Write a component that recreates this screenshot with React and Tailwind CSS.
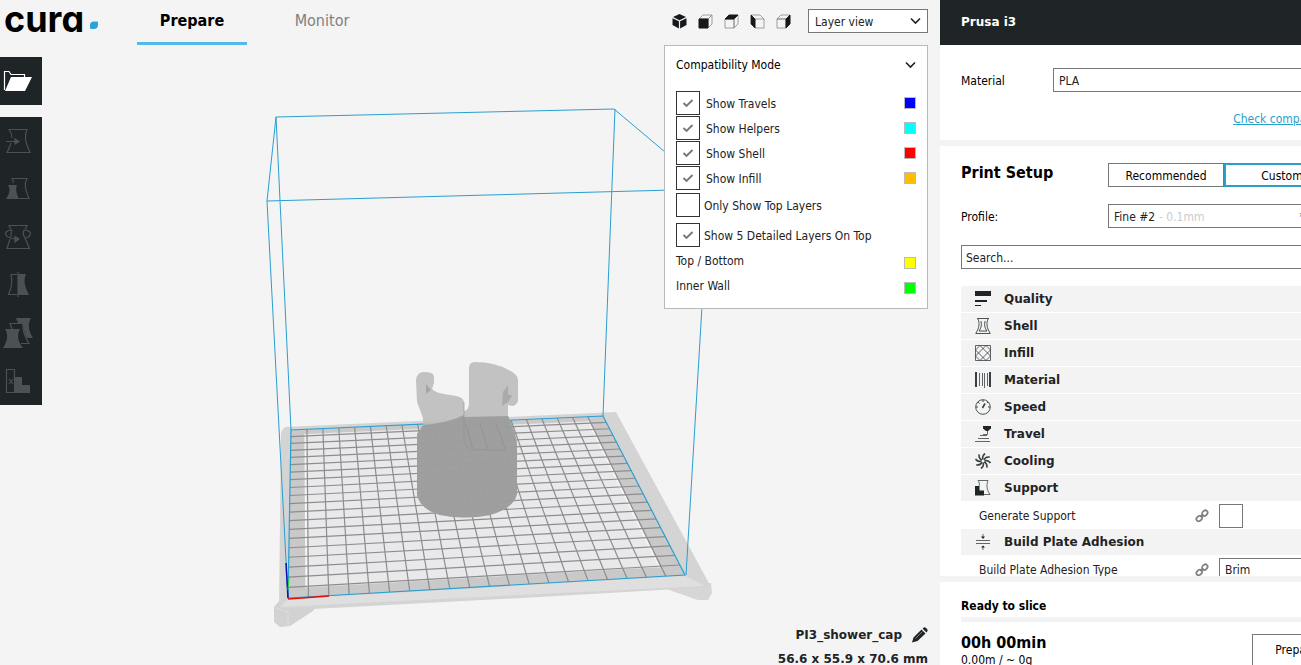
import clsx from 'clsx'

const tools = [
  { name: 'Move', icon: MoveIcon },
  { name: 'Scale', icon: ScaleIcon },
  { name: 'Rotate', icon: RotateIcon },
  { name: 'Mirror', icon: MirrorIcon },
  { name: 'Per model settings', icon: PerModelIcon },
  { name: 'Support blocker', icon: BlockerIcon },
]

const layerTypes = [
  { label: 'Show Travels', color: 'bg-[#0000ff]' },
  { label: 'Show Helpers', color: 'bg-[#00ffff]' },
  { label: 'Show Shell', color: 'bg-[#ff0000]' },
  { label: 'Show Infill', color: 'bg-[#ffbf00]' },
]

const legend = [
  { label: 'Top / Bottom', color: 'bg-[#ffff00]' },
  { label: 'Inner Wall', color: 'bg-[#00ff00]' },
]

/* ---------- 3D scene ---------- */

// projected corners of the 200 x 200 mm build plate
const FL = [288, 598]
const FR = [685, 575]
const BR = [603, 416]
const BL = [291, 430]

// unit square -> screen
function project(u, v) {
  const dx1 = FR[0] - BR[0]
  const dy1 = FR[1] - BR[1]
  const dx2 = BL[0] - BR[0]
  const dy2 = BL[1] - BR[1]
  const sx = FL[0] - FR[0] + BR[0] - BL[0]
  const sy = FL[1] - FR[1] + BR[1] - BL[1]
  const det = dx1 * dy2 - dx2 * dy1
  const g = (sx * dy2 - dx2 * sy) / det
  const h = (dx1 * sy - sx * dy1) / det
  const w = g * u + h * v + 1
  const x = ((FR[0] - FL[0] + g * FR[0]) * u + (BL[0] - FL[0] + h * BL[0]) * v + FL[0]) / w
  const y = ((FR[1] - FL[1] + g * FR[1]) * u + (BL[1] - FL[1] + h * BL[1]) * v + FL[1]) / w
  return [x, y]
}

const points = (...list) => list.map((p) => p.join(',')).join(' ')

function Line({ from, to, ...rest }) {
  return <line x1={from[0]} y1={from[1]} x2={to[0]} y2={to[1]} {...rest} />
}

function Scene() {
  const steps = Array.from({ length: 19 }, (_, i) => (i + 1) / 20)
  return (
    <svg className="absolute top-0 left-0" width="940" height="665" viewBox="0 0 940 665" fill="none">
      {/* Printer bed */}
      <path d="M274 607 L280 600 L320 602 L313 611 L290 626 L280 627 L274 622Z" fill="#d2d2d2" />
      <path d="M660 585 L711 583 L712 593 L708 600 L698 600 L672 591Z" fill="#d6d6d6" />
      <path d="M281 432 L285 427 L616 412 L711 587 L694 588 L540 597 L313 609 L279 608Z" fill="#d4d4d4" />
      <path d="M288 599 L685 576 L705 586 L540 594 L281 607Z" fill="#dfdfdf" />
      <path d="M276 608 L288 612 L288 626" stroke="#dedede" />

      {/* Build plate */}
      <polygon points={points(FL, FR, BR, BL)} fill="#c9c9ca" />
      <polygon
        points={points(project(0.045, 0.045), project(0.945, 0.045), project(0.945, 0.965), project(0.045, 0.965))}
        fill="#e9e9eb"
      />
      <Line from={project(0.045, 0.045)} to={project(0.045, 0.965)} stroke="#f4f4f4" strokeWidth="2" />
      <Line from={project(0.945, 0.045)} to={project(0.945, 0.965)} stroke="#f4f4f4" strokeWidth="2" />
      {steps.map((t) => (
        <g key={t} stroke="#8d8d8d" strokeWidth="1.2">
          <Line from={project(t, 0)} to={project(t, 1)} />
          <Line from={project(0, t)} to={project(1, t)} />
        </g>
      ))}

      {/* Build volume */}
      <g stroke="#2a9fd0">
        <polygon points={points(FL, FR, BR, BL)} strokeWidth="1.2" />
        <polygon points="276,117 614,109 709,189 267,201" />
        <path d="M276 117 L291 430 M615 109 L603 416 M267 201 L288 598 M709 189 L686 575" />
      </g>

      {/* Model */}
      <path
        d="M416 380 Q417 372 424 372 Q433 372 434 376 L434 383 L432 389 Q436 393 444 394 L456 396 Q463 397 464 402 L464 411 Q469 410 469 403 L469 368 Q469 362 475 362 Q499 362 515 374 Q518 377 518 380 L518 401 Q516 406 512 406 L508 405 L508 416 Q517 436 517 445 L517 494 Q514 508 490 515 Q465 520 440 515 Q420 509 417 495 L417 434 L423 427 L423 418 L417 402Z"
        fill="#bdbdbd"
        fillOpacity="0.9"
      />
      <path
        d="M423 425 Q448 423 464 415 L464 417 L508 416 Q517 436 517 445 L517 494 Q514 508 490 515 Q465 520 440 515 Q420 509 417 495 L417 434Z"
        fill="#979797"
        fillOpacity="0.82"
      />
      <path d="M508 385 L503 392 L502 406 L508 402 L512 396 L508 394Z" fill="#aaa" />
      <path d="M426 384 L431 390 L426 394Z" fill="#a6a6a6" />
      <path d="M464 402 L464 442 L471 452" stroke="#909090" strokeOpacity="0.6" />
      <path d="M466 424 L473 450 H506 M480 424 L488 450 M496 424 L506 450" stroke="#8e8e8e" strokeOpacity="0.6" />

      {/* Origin axes */}
      <path d="M286 563 L288 598" stroke="#1010b0" strokeWidth="1.5" />
      <path d="M289 577 L288 590" stroke="#20d040" />
      <path d="M288 599 L329 596" stroke="#e01010" strokeWidth="1.5" />
    </svg>
  )
}

/* ---------- Toolbar icons ---------- */

function FolderIcon() {
  return (
    <svg width="30" height="24" viewBox="0 0 30 24" fill="none">
      <path d="M1.500 21 V2.500 H6 L8 5.500 H21.500 V8" stroke="#fff" strokeWidth="1.2" />
      <path d="M8 8 H29 L22 22 H2Z" fill="#fff" />
    </svg>
  )
}

function MoveIcon() {
  return (
    <svg width="26" height="26" viewBox="0 0 26 26" fill="none" stroke="#4c5254" strokeWidth="1.2">
      <path d="M7 10 C7 7 6 4 4 1.500 H22 C19 8 20 13 25 24.500 H2 C4 21 5 18 6 15 M1 13.500 H12" />
      <path d="M10 11 L14 13.500 L10 16Z" fill="#4c5254" />
    </svg>
  )
}

function ScaleIcon() {
  return (
    <svg width="26" height="26" viewBox="0 0 26 26" fill="none">
      <path d="M8 7 C9 5 8 4 7 2.500 H22 C19 8 20 13 24 22.500 H14" stroke="#4c5254" strokeWidth="1.2" />
      <path d="M3 9 H12 C10 14 12 18 14 23 H1 C4 18 6 14 3 9Z" fill="#4c5254" />
    </svg>
  )
}

function RotateIcon() {
  return (
    <svg width="26" height="26" viewBox="0 0 26 26" fill="none" stroke="#4c5254" strokeWidth="1.2">
      <path d="M6 5.500 L4 1.500 H22 L20 5.500 M20 14 L24.500 24.500 H2 L5 15" />
      <path d="M7 6 C1 6 0 9 1 11 C2 13 4 14 10 15 M7 6 C6 8 6 11 6 13 M19 6 C25 6 26 9 25 11 C24 13 22 14 20 14 C18 11 18 8 19 6" />
      <path d="M10 12.500 L14 15 L10 18Z" fill="#4c5254" />
    </svg>
  )
}

function MirrorIcon() {
  return (
    <svg width="26" height="26" viewBox="0 0 26 26" fill="none">
      <path d="M12 2.500 H6 C8 10 7 15 3.500 22.500 H12" stroke="#4c5254" strokeWidth="1.2" />
      <path d="M13 2 H21 C18 9 20 15 24 23 H13Z" fill="#4c5254" />
      <path d="M13 0 V25" stroke="#4c5254" strokeWidth="1.2" />
    </svg>
  )
}

function PerModelIcon() {
  return (
    <svg width="30" height="32" viewBox="0 0 30 32" fill="none">
      <path d="M13 1 H28 C24 8 26 14 30 21 H24 C20 14 22 12 19 6 H15Z" fill="#4c5254" />
      <path d="M9 12 L7 6.500 H20 C19 14 22 20 26 26.500 H18" stroke="#4c5254" strokeWidth="1.200" />
      <path d="M2 12 H17 C13 19 16 26 20 31 H0 C4 25 6 18 2 12Z" fill="#4c5254" />
    </svg>
  )
}

function BlockerIcon() {
  return (
    <svg width="26" height="26" viewBox="0 0 26 26" fill="none">
      <path d="M10 9 H17 V17 H25 V25 H10Z" fill="#4c5254" />
      <path d="M1.500 1.500 H9.500 V24.500 H1.500Z M4 11 L8 16 M8 11 L4 16" stroke="#4c5254" strokeWidth="1.2" />
    </svg>
  )
}

/* ---------- Camera buttons ---------- */

const cube = {
  front: 'M1 5 H10 V14 H1Z',
  top: 'M1 5 L5 1 H14 L10 5Z',
  right: 'M10 5 L14 1 V10 L10 14Z',
}

function CubeIcon({ side }) {
  if (side === 'iso') {
    return (
      <svg width="15" height="15" viewBox="0 0 15 15" fill="#16191a">
        <path d="M7.500 0 L14 3 L7.500 6.300 L1 3Z M0.500 4.200 L6.900 7.300 V14.500 L0.500 11Z M14.500 4.200 L8.100 7.300 V14.500 L14.500 11Z" />
      </svg>
    )
  }
  if (side === 'left') {
    return (
      <svg width="15" height="15" viewBox="0 0 15 15" fill="none" stroke="#888" strokeWidth="0.800">
        <path d="M5 5 H14 V14 H5Z M1 1 H10 L14 5" />
        <path d="M1 1 L5 5 V14 L1 10Z" fill="#16191a" stroke="#16191a" />
      </svg>
    )
  }
  return (
    <svg width="15" height="15" viewBox="0 0 15 15" fill="none" stroke="#888" strokeWidth="0.800" strokeLinejoin="round">
      <path d={cube.front} />
      <path d={cube.top} />
      <path d={cube.right} />
      <path d={cube[side]} fill="#16191a" stroke="#16191a" />
    </svg>
  )
}

/* ---------- Settings category icons ---------- */

const categories = [
  {
    name: 'Quality',
    icon: <path d="M0 0 H16 V5 H0Z M0 9 H12 V11 H0Z M0 14 H6 V15 H0Z" fill="#1f2426" stroke="none" />,
  },
  {
    name: 'Shell',
    icon: (
      <path
        d="M2 0.500 H14 M0.500 15.500 H15.500 M3 1 C5 6 4 10 1 15 M13 1 C11 6 12 10 15 15 M6 3 C7 8 6 10 4 13 H12 C10 10 9 8 10 3"
        strokeWidth="0.900"
      />
    ),
  },
  {
    name: 'Infill',
    icon: (
      <path
        d="M0.500 0.500 H15.500 V15.500 H0.500Z M0.500 5 L5 0.500 M0.500 11 L11 0.500 M5 15.500 L15.500 5 M11 15.500 L15.500 11 M0.500 11 L5 15.500 M0.500 5 L11 15.500 M5 0.500 L15.500 11 M11 0.500 L15.500 5"
        strokeWidth="0.800"
      />
    ),
  },
  {
    name: 'Material',
    icon: (
      <>
        <path d="M1 0 V15 M15 0 V15" strokeWidth="2" />
        <path d="M4.500 1 V14 M7.500 1 V14 M9.500 1 V16 M12.500 1 V14" strokeWidth="0.800" />
      </>
    ),
  },
  {
    name: 'Speed',
    icon: (
      <>
        <circle cx="8" cy="8" r="7.300" strokeWidth="0.900" />
        <path d="M8 1 V3 M1 8 H3 M13 8 H15 M3 3 L4.500 4.500 M13 3 L12 4" />
        <path d="M7.500 9 L10 4.500" strokeWidth="1.600" />
      </>
    ),
  },
  {
    name: 'Travel',
    icon: (
      <>
        <path d="M8 0 H16 V2.500 L13 5 H11 L8 2.500Z" fill="#1f2426" stroke="none" />
        <path d="M12.500 5 V8.500 H8 M5 9.500 H12 M3 12.500 H14 M0 15.500 H15" stroke="#666" />
      </>
    ),
  },
  {
    name: 'Cooling',
    icon: (
      <g strokeWidth="1.600">
        {[0, 45, 90, 135, 180, 225, 270, 315].map((angle) => (
          <path key={angle} d="M8 6.500 C7 4 8 2 10 0.500" transform={`rotate(${angle} 8 8)`} />
        ))}
      </g>
    ),
  },
  {
    name: 'Support',
    icon: (
      <>
        <path d="M0 6 H4.500 V10.500 H9 V15.500 H0Z" fill="#1f2426" stroke="none" />
        <path d="M4 6 C5 4 4 2 3 0.500 H13 C11 6 12 10 15 14.500 H9" stroke="#666" />
      </>
    ),
  },
]

const adhesionIcon = (
  <>
    <path d="M1 6.500 H15 M1 9.500 H15 M8 0 V4 M8 12 V16" stroke="#666" />
    <path d="M6 2.500 H10 L8 5Z M6 13.500 H10 L8 11.500Z" fill="#1f2426" stroke="none" />
  </>
)

function Category({ name, icon }) {
  return (
    <button className="flex h-[27px] w-full items-center border-b border-white bg-[#f3f3f3] pl-3.5 text-left">
      <svg width="16" height="16" viewBox="0 0 16 16" fill="none" stroke="#3a3f41">
        {icon}
      </svg>
      <span className="pl-[13px] font-['DejaVu_Sans'] text-xs font-bold text-[#1f2426]">{name}</span>
    </button>
  )
}

function LinkIcon() {
  return (
    <svg width="14" height="14" viewBox="0 0 14 14" fill="none" stroke="#7d7d7d" strokeWidth="1.700">
      <ellipse cx="4.200" cy="9.500" rx="3.100" ry="2.400" transform="rotate(-45 4.200 9.500)" />
      <ellipse cx="9.800" cy="4.200" rx="3.100" ry="2.400" transform="rotate(-45 9.800 4.200)" />
      <path d="M5.500 8.200 L8.500 5.400" />
    </svg>
  )
}

function Chevron() {
  return (
    <svg width="12" height="8" viewBox="0 0 12 8" fill="none" stroke="#222" strokeWidth="1.600">
      <path d="M2 1.500 L6.500 6 L11 1.500" />
    </svg>
  )
}

function CheckBox({ id, checked, dim }) {
  return (
    <span className="grid size-6 shrink-0 place-items-center">
      <input
        id={id}
        type="checkbox"
        defaultChecked={checked}
        className={clsx(
          'peer col-start-1 row-start-1 size-6 appearance-none border bg-white',
          dim ? 'border-[#777]' : 'border-[#333]',
        )}
      />
      <svg
        className="pointer-events-none invisible col-start-1 row-start-1 peer-checked:visible"
        width="12"
        height="10"
        viewBox="0 0 12 10"
        fill="none"
        stroke="#777"
        strokeWidth="1.900"
      >
        <path d="M1.500 5 L4.500 8 L10.500 2" />
      </svg>
    </span>
  )
}

function Swatch({ color }) {
  return <span className={clsx('size-3 border border-[#bbb]', color)} />
}

function ViewPanel() {
  return (
    <section className="mt-3 w-[264px] border border-[#b9b9b9] bg-white px-[11px] pt-[7px] pb-2.5 text-[#222]">
      <button className="flex h-6 w-full items-center justify-between text-black">
        Compatibility Mode
        <Chevron />
      </button>
      <div className="mt-3.5 flex flex-col gap-px">
        {layerTypes.map(({ label, color }) => (
          <div key={label} className="flex h-6 items-center">
            <CheckBox id={label} checked />
            <label htmlFor={label} className="flex-1 pt-px pl-1.5">{label}</label>
            <Swatch color={color} />
          </div>
        ))}
      </div>
      <div className="mt-[3px] flex items-center gap-1">
        <CheckBox id="only-top" />
        <label htmlFor="only-top" className="pt-px">Only Show Top Layers</label>
      </div>
      <div className="mt-1.5 flex items-center gap-1">
        <CheckBox id="detailed-top" checked />
        <label htmlFor="detailed-top" className="pt-px">Show 5 Detailed Layers On Top</label>
      </div>
      <div className="pt-px">
        {legend.map(({ label, color }) => (
          <div key={label} className="flex h-[25px] justify-between">
            <span className="pt-px leading-6">{label}</span>
            <span className="flex items-end pb-1">
              <Swatch color={color} />
            </span>
          </div>
        ))}
      </div>
    </section>
  )
}

function Viewport() {
  return (
    <main className="relative flex min-w-0 flex-1 flex-col justify-between overflow-hidden">
      <Scene />
      <div className="relative flex items-start justify-between pr-3">
        <div>
          <header className="flex h-[45px] items-start">
            <h1 className="flex h-[38px] w-[137px] items-center pl-1 font-[Inter] text-[36px] leading-8 font-bold text-black [font-feature-settings:'cv11','ss03']">
              cura
              <svg className="mt-3 ml-1.5" width="8" height="8" viewBox="0 0 8 8">
                <path d="M4 0.500 H7 Q8 0.500 8 1.500 V3.500 Q8 8 3.500 8 H1.500 Q0 8 0 6.500 V4.500 Q0 0.500 4 0.500Z" fill="#2aa4d5" />
              </svg>
            </h1>
            <nav className="flex gap-5 text-base">
              <button className="h-[45px] w-[110px] border-b-[3px] border-[#54b8e9] font-bold text-black">
                Prepare
              </button>
              <button className="h-[45px] w-[110px] border-b-[3px] border-transparent text-[#808080]">
                Monitor
              </button>
            </nav>
          </header>
          <aside className="mt-3 w-[42px]">
            <button aria-label="Open file" className="flex h-12 w-full items-center bg-[#1f2426] pl-[3px]">
              <FolderIcon />
            </button>
            <div className="mt-3 bg-[#1f2426]">
              {tools.map(({ name, icon: Icon }) => (
                <button key={name} aria-label={name} className="flex h-12 w-9 items-center justify-center">
                  <Icon />
                </button>
              ))}
            </div>
          </aside>
        </div>
        <div className="flex flex-col items-end pt-[9px]">
          <div className="flex items-center">
            <div className="flex gap-[11px] pr-[17px]">
              {['iso', 'front', 'top', 'left', 'right'].map((side) => (
                <button key={side} aria-label={`${side} view`}>
                  <CubeIcon side={side} />
                </button>
              ))}
            </div>
            <div className="relative">
              <select aria-label="View mode" className="h-6 w-[120px] appearance-none border border-[#777] bg-white pt-px pl-1.5 text-[#222]">
                <option>Layer view</option>
              </select>
              <span className="pointer-events-none absolute inset-y-0 right-[7px] flex items-center">
                <Chevron />
              </span>
            </div>
          </div>
          <ViewPanel />
        </div>
      </div>
      <div className="relative flex flex-col items-end pr-3 font-['DejaVu_Sans'] text-xs font-bold text-[#1f2426]">
        <button className="flex items-center gap-2.5">
          PI3_shower_cap
          <svg width="16" height="16" viewBox="0 0 16 16" fill="#1f2426">
            <path d="M0 15.500 L1.500 10.500 L9.500 2.500 L13.500 6.500 L5.500 14Z M10.500 1.500 L12 0.500 Q13 0 14 1 L15.500 2.500 V4 L14.500 5.500Z" />
            <path d="M3.500 11.500 L10.500 4.500" stroke="#999" strokeWidth="0.800" />
          </svg>
        </button>
        <p className="mt-2.5 leading-3">56.6 x 55.9 x 70.6 mm</p>
      </div>
    </main>
  )
}

function Sidebar() {
  return (
    <aside className="w-[361px] shrink-0 overflow-hidden">
      {/* Content is wider than the visible column and runs off the right edge */}
      <div className="flex h-full w-[420px] flex-col bg-white text-black">
        <h2 className="h-[45px] shrink-0 bg-[#1f2426] pl-[21px] font-['DejaVu_Sans'] text-xs leading-[44px] font-bold text-white">
          Prusa i3
        </h2>
        <section className="h-[101px] shrink-0 border-b-[6px] border-[#f3f3f3] pt-[23px] pr-5 pl-[21px]">
          <div className="flex items-center">
            <label htmlFor="material" className="w-[92px] pt-px">Material</label>
            <select id="material" className="h-6 flex-1 appearance-none border border-[#777] bg-white pt-px pl-[5px] text-[#222]">
              <option>PLA</option>
            </select>
          </div>
          <p className="mt-[19px] text-right leading-4">
            <a href="#compatibility" className="text-[#2a9fc9] underline">Check compatibility</a>
          </p>
        </section>

        <section className="flex h-[436px] shrink-0 flex-col border-b-[6px] border-[#f3f3f3] pt-[17px] pr-5 pl-[21px]">
          <div className="flex">
            <h3 className="w-[147px] text-base leading-5 font-bold">Print Setup</h3>
            <button className="h-6 w-[116px] border border-[#777] pt-px">Recommended</button>
            <button className="h-6 flex-1 border-2 border-[#2a9fc9] pt-px">Custom</button>
          </div>
          <div className="mt-[17px] flex items-center">
            <label htmlFor="profile" className="w-[147px] pt-px">Profile:</label>
            <div className="relative flex-1">
              <select id="profile" className="h-6 w-full appearance-none border border-[#777] bg-white pt-px pl-[5px] text-[#222]">
                <option>Fine #2</option>
              </select>
              <span className="pointer-events-none absolute inset-y-0 right-3 left-[51px] flex items-center justify-between pt-px text-[#ccc]">
                - 0.1mm
                <span className="pr-[23px] text-[#555]">*</span>
              </span>
            </div>
          </div>
          <input
            type="text"
            aria-label="Search settings"
            placeholder="Search..."
            className="mt-[17px] h-6 shrink-0 border border-[#777] px-1 pt-px placeholder:text-[#222]"
          />
          <div className="mt-[17px] min-h-0 overflow-hidden">
            {categories.map((c) => (
              <Category key={c.name} name={c.name} icon={c.icon} />
            ))}
            <div className="flex h-[27px] items-center pl-[18px] text-[#222]">
              <label htmlFor="generate-support" className="w-[216px]">Generate Support</label>
              <LinkIcon />
              <span className="pl-2.5">
                <CheckBox id="generate-support" dim />
              </span>
            </div>
            <Category name="Build Plate Adhesion" icon={adhesionIcon} />
            <div className="flex h-[27px] items-center pl-[18px] text-[#222]">
              <label htmlFor="adhesion" className="w-[216px]">Build Plate Adhesion Type</label>
              <LinkIcon />
              <select id="adhesion" className="ml-2.5 h-6 flex-1 appearance-none border border-[#777] bg-white pl-[5px]">
                <option>Brim</option>
              </select>
            </div>
          </div>
        </section>

        <section className="min-h-0 flex-1 overflow-hidden pt-4 pr-5 pl-[21px]">
          <h3 className="leading-4 font-bold">Ready to slice</h3>
          <div className="mt-[3px] h-[5px] bg-[#f3f3f3]" />
          <div className="mt-3 flex justify-between">
            <div>
              <p className="text-base leading-[18px] font-bold">00h 00min</p>
              <p className="leading-4 whitespace-nowrap">0.00m / ~ 0g</p>
            </div>
            <button className="h-8 w-[88px] shrink-0 border border-[#777]">Prepare</button>
          </div>
        </section>
      </div>
    </aside>
  )
}

export default function App() {
  return (
    <div className="flex h-screen overflow-hidden bg-[#f4f4f4] font-['DejaVu_Sans_Condensed','DejaVu_Sans',sans-serif] text-xs">
      <Viewport />
      <Sidebar />
    </div>
  )
}
